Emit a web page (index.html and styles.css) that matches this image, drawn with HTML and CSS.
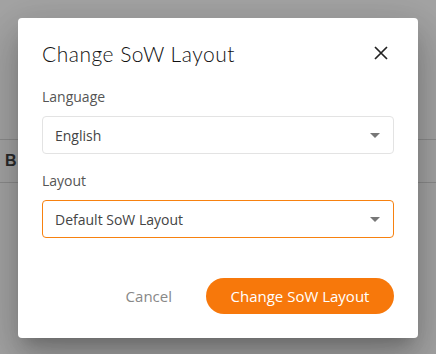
FILE: index.html
```html
<!DOCTYPE html>
<html lang="en">
<head>
  <meta charset="UTF-8" />
  <title>Change SoW Layout</title>
  <link rel="stylesheet" href="styles.css">
</head>
<body>

<!-- Page behind the backdrop -->
<div class="page">
  <div class="table-row">B</div>
</div>

<!-- Dialog -->
<div class="dialog">
  <div class="dialog-header">
    <h2>Change SoW Layout</h2>
    <button class="btn-close" aria-label="Close">
      <svg width="14" height="14" viewBox="0 0 14 14">
        <path d="M1 1 L13 13 M13 1 L1 13" stroke="#222" stroke-width="1.7" fill="none"/>
      </svg>
    </button>
  </div>

  <div class="form-group">
    <label>Language</label>
    <div class="select">English<span class="caret"></span></div>
  </div>

  <div class="form-group">
    <label>Layout</label>
    <div class="select focused">Default SoW Layout<span class="caret"></span></div>
  </div>

  <div class="dialog-actions">
    <button class="btn-cancel">Cancel</button>
    <button class="btn-primary">Change SoW Layout</button>
  </div>
</div>

</body>
</html>
```

FILE: styles.css
```css
body {
  margin: 0;
  background: #a4a4a4;
  font-family: 'Open Sans', sans-serif;
  width: 436px;
  height: 354px;
  overflow: hidden;
}

/* Page behind */
.page {
  padding-top: 139px;
}

.table-row {
  height: 42px;
  border-top: 1px solid #8c8c8c;
  border-bottom: 1px solid #8c8c8c;
  padding-left: 5px;
  font-family: 'Liberation Sans', sans-serif;
  font-weight: bold;
  font-size: 16px;
  line-height: 42px;
  color: #2a2a2a;
}

/* Dialog */
.dialog {
  position: absolute;
  top: 18px;
  left: 18px;
  width: 352px;
  padding: 20px 24px 24px;
  background: #fff;
  border-radius: 4px;
  box-shadow: 0 11px 15px -7px rgba(0,0,0,0.2),
              0 24px 38px 3px rgba(0,0,0,0.14),
              0 9px 46px 8px rgba(0,0,0,0.12);
}

.dialog-header {
  display: flex;
  justify-content: space-between;
  align-items: center;
  height: 30px;
  margin-bottom: 19px;
}

.dialog-header h2 {
  margin: 0;
  font-family: 'Lato', sans-serif;
  font-weight: 300;
  font-size: 21px;
  letter-spacing: 0.5px;
  color: #111;
}

.btn-close {
  border: none;
  background: none;
  padding: 0;
  margin-right: 6px;
  width: 14px;
  height: 14px;
  display: flex;
}

.form-group {
  margin-bottom: 17px;
}

label {
  display: block;
  font-size: 14px;
  line-height: 20px;
  color: #555;
  margin-bottom: 9px;
}

.select {
  height: 36px;
  border: 1px solid #e3e3e3;
  border-radius: 4px;
  padding: 0 12px;
  display: flex;
  justify-content: space-between;
  align-items: center;
  font-size: 14px;
  color: #444;
}

.select.focused {
  border-color: #f7810f;
}

.caret {
  width: 0;
  height: 0;
  border-left: 5px solid transparent;
  border-right: 5px solid transparent;
  border-top: 5px solid #777;
  margin-right: 1px;
}

.dialog-actions {
  display: flex;
  justify-content: flex-end;
  align-items: center;
  gap: 18px;
  margin-top: 40px;
}

.btn-cancel {
  border: none;
  background: none;
  font-family: 'Open Sans', sans-serif;
  font-size: 15px;
  color: #888;
  padding: 0 16px;
  height: 36px;
}

.btn-primary {
  border: none;
  background: #f7780b;
  color: #fff;
  font-family: 'Open Sans', sans-serif;
  font-size: 15px;
  height: 36px;
  width: 188px;
  border-radius: 18px;
}
```
